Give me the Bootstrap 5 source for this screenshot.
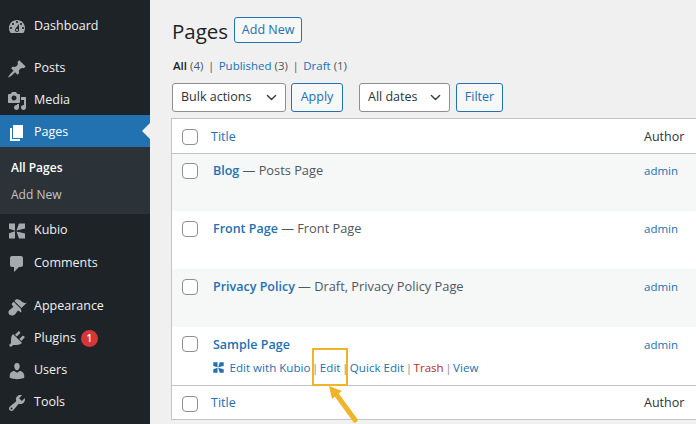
<!DOCTYPE html>
<html lang="en">
<head>
    <meta charset="UTF-8">
    <meta name="viewport" content="width=device-width, initial-scale=1.0">
    <title>Pages</title>
    <link href="https://cdn.jsdelivr.net/npm/bootstrap@5.3.3/dist/css/bootstrap.min.css" rel="stylesheet">
    <style>
        html, body { height: 100%; }
        body { background: #f0f0f1; font-family: "Open Sans", "Noto Sans", sans-serif; font-size: 12.5px; color: #3c434a; overflow: hidden; position: relative; }
        a { text-decoration: none; color: #2271b1; }
        .wp-shell { width: 696px; height: 424px; overflow: hidden; }
        .wp-side { width: 150px; flex: none; background: #1d2327; padding-top: 9px; height: 424px; }
        .wp-item { height: 32px; padding-left: 7px; gap: 7px; color: #f0f0f1; font-size: 12.5px; position: relative; padding-top: 1px; }
        .wp-item.wp-up { padding-top: 3px; }
        .wp-item svg { width: 20px; height: 20px; fill: #a7aaad; flex: none; }
        .wp-item.wp-current { background: #2271b1; color: #fff; }
        .wp-item.wp-current svg { fill: #fff; }
        .wp-item.wp-current::after { content: ""; position: absolute; right: 0; top: 8px; border: 8px solid transparent; border-right-color: #f0f0f1; border-left: 0; }
        .wp-item.wp-tight { margin-top: 1px; }
        .wp-gap1 { height: 10px; }
        .wp-gap2 { height: 11px; }
        .wp-sub { background: #2c3338; height: 67px; padding: 7px 0 0 11px; font-size: 12px; }
        .wp-sub a { display: block; height: 27px; line-height: 27px; color: #c3c4c7; }
        .wp-sub a.wp-on { color: #fff; font-weight: 600; }
        .wp-count { width: 17px; height: 17px; line-height: 17px; border-radius: 50%; background: #d63638; color: #fff; font-size: 10px; font-weight: 600; text-align: center; margin-left: -2px; }
        .wp-main { flex: 1; min-width: 0; padding-left: 21px; overflow: hidden; }
        .wp-head { padding-top: 17px; height: 43px; gap: 6px; padding-left: 1px; }
        .wp-head h1 { font-size: 20.5px; font-weight: 400; margin: 3px 0 0; color: #1d2327; }
        .wp-btn.btn { font-size: 12.5px; line-height: 1; color: #2271b1; border-color: #2271b1; background: #f6f7f7; border-radius: 3px; padding: 0; height: 29px; display: flex; align-items: center; justify-content: center; }
        .wp-head .wp-btn.btn { width: 68px; height: 26px; }
        .wp-views { margin-top: 14px; height: 18px; font-size: 11.5px; color: #50575e; gap: 4.5px; padding-left: 2px; }
        .wp-views b { color: #1d2327; font-weight: 600; }
        .wp-bar { margin-top: 8px; padding-left: 1px; }
        .wp-select.form-select { height: 29px; min-height: 0; font-size: 12.5px; color: #2c3338; border-color: #8c8f94; border-radius: 3px; padding: 0 20px 0 8px; background-position: right 8px center; background-size: 11px 11px; box-shadow: none; }
        .wp-bulk.form-select { width: 114px; }
        .wp-dates.form-select { width: 91px; margin-left: 16px; }
        .wp-apply.btn { width: 52px; margin-left: 5px; }
        .wp-filter.btn { width: 47px; margin-left: 6px; }
        .wp-grid { width: 600px; margin-top: 6px; background: #fff; border: 1px solid #c3c4c7; border-right: 0; border-collapse: separate; border-spacing: 0; table-layout: fixed; }
        .wp-grid td { padding: 0; vertical-align: top; }
        .wp-grid .wp-chk { width: 39px; padding-left: 10px; }
        .wp-grid .wp-who { width: 128px; padding-left: 1px; }
        .wp-grid tr.wp-hd td { height: 34px; vertical-align: middle; font-size: 12.5px; padding-top: 2px; }
        .wp-grid tr.wp-hd td.wp-who { color: #2c3338; }
        .wp-grid thead tr.wp-hd td { height: 35px; border-bottom: 1px solid #c3c4c7; }
        .wp-grid tfoot td { border-top: 1px solid #c3c4c7; }
        .wp-grid tbody tr { height: 58px; }
        .wp-grid tbody tr:first-child { height: 57px; }
        .wp-grid tbody td { padding-top: 8px; font-size: 12.5px; }
        .wp-grid tbody td.wp-chk { padding-top: 10px; }
        .wp-grid tbody td.wp-who { font-size: 11.5px; padding-top: 9px; }
        .wp-grid tbody tr:first-child td { padding-top: 7px; }
        .wp-grid tbody tr:first-child td.wp-chk { padding-top: 9px; }
        .wp-grid tbody tr:first-child td.wp-who { padding-top: 8px; }
        .wp-grid tbody tr:last-child td, .wp-grid tbody tr:last-child td.wp-chk, .wp-grid tbody tr:last-child td.wp-who { padding-top: 9px; }
        .wp-grid tbody tr.wp-alt td { background: #f6f7f7; }
        .wp-grid .wp-ttl { padding-left: 2px; }
        .wp-grid .wp-pg { font-weight: 600; }
        .wp-grid .wp-state { color: #50575e; font-size: 12.8px; }
        .wp-box.form-check-input { width: 16px; height: 16px; margin: 0; display: block; border: 1px solid #8c8f94; border-radius: 4px; background-color: #fff; }
        .wp-acts { font-size: 11.6px; margin-top: 4px; color: #8c8f94; white-space: nowrap; display: flex; align-items: center; gap: 1.5px; }
        .wp-acts svg { width: 13px; height: 13px; fill: #2271b1; margin-right: 3px; margin-left: -1px; }
        .wp-trash { color: #b32d2e; }
        .wp-mark { position: absolute; left: 312px; top: 348px; width: 36px; height: 38px; border: 2px solid #f0b429; }
        .wp-arrow { position: absolute; left: 322px; top: 384px; width: 50px; height: 40px; }
    </style>
</head>
<body>
<div class="wp-shell d-flex">
    <div class="wp-side">
        <div class="wp-item wp-up d-flex align-items-center"><svg viewBox="0 0 20 20"><path d="M3.76 16h12.48c1.1-1.37 1.76-3.11 1.76-5 0-4.42-3.58-8-8-8s-8 3.58-8 8c0 1.89.66 3.63 1.76 5zM10 4c.55 0 1 .45 1 1s-.45 1-1 1-1-.45-1-1 .45-1 1-1zM6 6c.55 0 1 .45 1 1s-.45 1-1 1-1-.45-1-1 .45-1 1-1zm8 0c.55 0 1 .45 1 1s-.45 1-1 1-1-.45-1-1 .45-1 1-1zm-5.37 5.55L12 7v6c0 1.1-.9 2-2 2s-2-.9-2-2c0-.57.24-1.08.63-1.45zM4 10c.55 0 1 .45 1 1s-.45 1-1 1-1-.45-1-1 .45-1 1-1zm12 0c.55 0 1 .45 1 1s-.45 1-1 1-1-.45-1-1 .45-1 1-1zm-5 3c0-.55-.45-1-1-1s-1 .45-1 1 .45 1 1 1 1-.45 1-1z" fill-rule="evenodd"/></svg>Dashboard</div>
        <div class="wp-gap1"></div>
        <div class="wp-item wp-up d-flex align-items-center"><svg viewBox="0 0 20 20"><path d="M10.44 3.02l1.82-1.82 6.36 6.35-1.83 1.82c-1.05-.68-2.48-.57-3.41.36l-.75.75c-.92.93-1.04 2.35-.35 3.41l-1.83 1.82-2.41-2.41-2.8 2.79c-.42.42-3.38 2.71-3.8 2.29s1.86-3.39 2.28-3.81l2.79-2.79L4.1 9.36l1.83-1.82c1.05.69 2.48.57 3.4-.36l.75-.75c.93-.92 1.05-2.35.36-3.41z"/></svg>Posts</div>
        <div class="wp-item wp-up d-flex align-items-center"><svg viewBox="0 0 20 20"><path d="M13 11V4c0-.55-.45-1-1-1h-1.67L9 1H5L3.67 3H2c-.55 0-1 .45-1 1v7c0 .55.45 1 1 1h10c.55 0 1-.45 1-1zM7 4.5c1.38 0 2.5 1.12 2.5 2.5S8.38 9.5 7 9.5 4.5 8.38 4.5 7 5.62 4.5 7 4.5zM14 6h5v10.5c0 1.38-1.12 2.5-2.5 2.5S14 17.88 14 16.5s1.12-2.5 2.5-2.5c.17 0 .34.02.5.05V9h-3V6zm-4 8.05V13h2v3.5c0 1.38-1.12 2.5-2.5 2.5S7 17.88 7 16.5 8.12 14 9.5 14c.17 0 .34.02.5.05z" fill-rule="evenodd"/></svg>Media</div>
        <div class="wp-item wp-up wp-current d-flex align-items-center"><svg viewBox="0 0 20 20"><path d="M6 15V2h10v13H6zm-1 1h8v2H3V5h2v11z"/></svg>Pages</div>
        <div class="wp-sub"><a class="wp-on" href="#">All Pages</a><a href="#">Add New</a></div>
        <div class="wp-item d-flex align-items-center"><svg viewBox="0 0 20 20"><path d="M2 2.500h6v7.300L2 7.800zM2 12.200l6-2v7.300H2zM9.500 9.500 12 2.500h6v5zM9.500 10.500 18 12.500v5h-6z"/></svg>Kubio</div>
        <div class="wp-item wp-tight d-flex align-items-center"><svg viewBox="0 0 20 20"><path d="M5 2h9c1.100 0 2 .9 2 2v7c0 1.100-.9 2-2 2h-2l-5 5v-5H5c-1.100 0-2-.9-2-2V4c0-1.100.9-2 2-2z"/></svg>Comments</div>
        <div class="wp-gap2"></div>
        <div class="wp-item d-flex align-items-center"><svg viewBox="0 0 20 20"><path d="M14.48 11.06L7.41 3.99l1.5-1.5c.5-.56 2.3-.47 3.51.32 1.21.8 1.43 1.28 2.91 2.1 1.18.64 2.45 1.26 4.45.85zm-.71.71L6.7 4.7 4.93 6.47c-.39.39-.39 1.02 0 1.41l1.06 1.06c.39.39.39 1.03 0 1.42-.6.6-1.43 1.11-2.21 1.69-.35.26-.7.53-1.01.84C1.43 13.23.91 15.97 2.39 17.6c1.63 1.48 4.37.96 5.71-.38.31-.31.58-.66.84-1.01.58-.78 1.09-1.61 1.69-2.21.39-.39 1.03-.39 1.42 0l1.06 1.06c.39.39 1.02.39 1.41 0z"/></svg>Appearance</div>
        <div class="wp-item d-flex align-items-center"><svg viewBox="0 0 20 20"><path d="M13.11 4.36L9.87 7.6 8 5.73l3.24-3.24c.35-.34 1.05-.2 1.56.32.52.51.66 1.21.31 1.55zm-8 1.77l.91-1.12 9.01 9.01-1.19.84c-.71.71-2.63 1.16-3.82 1.16H6.14L4.9 17.26c-.59.59-1.54.59-2.12 0-.59-.58-.59-1.53 0-2.12l1.24-1.24v-3.88c0-1.13.4-3.19 1.09-3.89zm7.26 3.97l3.24-3.24c.34-.35 1.04-.21 1.55.31.52.51.66 1.21.31 1.55l-3.24 3.25z"/></svg>Plugins<span class="wp-count">1</span></div>
        <div class="wp-item d-flex align-items-center"><svg viewBox="0 0 20 20"><path d="M10 9.25c-2.27 0-2.73-3.44-2.73-3.44C7 4.02 7.82 2 9.97 2c2.16 0 2.98 2.02 2.71 3.81 0 0-.41 3.44-2.68 3.44zm0 2.57L12.72 10c2.39 0 4.52 2.33 4.52 4.53v2.49s-3.65 1.13-7.24 1.13c-3.65 0-7.24-1.13-7.24-1.13v-2.49c0-2.25 1.94-4.48 4.47-4.48z"/></svg>Users</div>
        <div class="wp-item d-flex align-items-center"><svg viewBox="0 0 20 20"><path d="M16.68 9.77c-1.34 1.34-3.3 1.67-4.95.99l-5.41 6.52c-.99.99-2.59.99-3.58 0s-.99-2.59 0-3.57l6.52-5.42c-.68-1.65-.35-3.61.99-4.95 1.28-1.28 3.12-1.62 4.72-1.06l-2.89 2.89 2.82 2.82 2.86-2.87c.53 1.58.18 3.39-1.08 4.65zM3.81 16.21c.4.39 1.04.39 1.43 0 .4-.4.4-1.04 0-1.43-.39-.4-1.03-.4-1.43 0-.39.39-.39 1.03 0 1.43z" fill-rule="evenodd"/></svg>Tools</div>
    </div>
    <div class="wp-main">
        <div class="wp-head d-flex align-items-center">
            <h1>Pages</h1>
            <a href="#" class="btn wp-btn">Add New</a>
        </div>
        <div class="wp-views d-flex align-items-center">
            <span><b>All</b> (4)</span><span>|</span>
            <span><a href="#">Published</a> (3)</span><span>|</span>
            <span><a href="#">Draft</a> (1)</span>
        </div>
        <div class="wp-bar d-flex">
            <select class="form-select wp-select wp-bulk"><option>Bulk actions</option></select>
            <button class="btn wp-btn wp-apply">Apply</button>
            <select class="form-select wp-select wp-dates"><option>All dates</option></select>
            <button class="btn wp-btn wp-filter">Filter</button>
        </div>
        <table class="wp-grid">
            <colgroup><col style="width:39px"><col><col style="width:128px"></colgroup>
            <thead>
                <tr class="wp-hd"><td class="wp-chk"><input type="checkbox" class="form-check-input wp-box"></td><td><a href="#">Title</a></td><td class="wp-who">Author</td></tr>
            </thead>
            <tbody>
                <tr class="wp-alt"><td class="wp-chk"><input type="checkbox" class="form-check-input wp-box"></td><td class="wp-ttl"><a class="wp-pg" href="#">Blog</a> <span class="wp-state">— Posts Page</span></td><td class="wp-who"><a href="#">admin</a></td></tr>
                <tr><td class="wp-chk"><input type="checkbox" class="form-check-input wp-box"></td><td class="wp-ttl"><a class="wp-pg" href="#">Front Page</a> <span class="wp-state">— Front Page</span></td><td class="wp-who"><a href="#">admin</a></td></tr>
                <tr class="wp-alt"><td class="wp-chk"><input type="checkbox" class="form-check-input wp-box"></td><td class="wp-ttl"><a class="wp-pg" href="#">Privacy Policy</a> <span class="wp-state">— Draft, Privacy Policy Page</span></td><td class="wp-who"><a href="#">admin</a></td></tr>
                <tr><td class="wp-chk"><input type="checkbox" class="form-check-input wp-box"></td><td class="wp-ttl"><a class="wp-pg" href="#">Sample Page</a>
                    <div class="wp-acts"><svg viewBox="0 0 20 20"><path d="M2 2h6.500v7.500L2 7.500zM2 12.500l6.500-2V18H2zM9.500 9.500 12 2h6v5.500zM9.500 10.500 18 12.500V18h-6z"/></svg><a href="#">Edit with Kubio</a><span>|</span><a href="#">Edit</a><span>|</span><a href="#">Quick Edit</a><span>|</span><a class="wp-trash" href="#">Trash</a><span>|</span><a href="#">View</a></div>
                </td><td class="wp-who"><a href="#">admin</a></td></tr>
            </tbody>
            <tfoot>
                <tr class="wp-hd"><td class="wp-chk"><input type="checkbox" class="form-check-input wp-box"></td><td><a href="#">Title</a></td><td class="wp-who">Author</td></tr>
            </tfoot>
        </table>
    </div>
</div>
<div class="wp-mark"></div>
<svg class="wp-arrow" viewBox="0 0 50 40"><path d="M7 2 20 7 10 15Z" fill="#f0b429"/><line x1="14" y1="10" x2="33" y2="36" stroke="#f0b429" stroke-width="5" stroke-linecap="round"/></svg>
</body>
</html>
